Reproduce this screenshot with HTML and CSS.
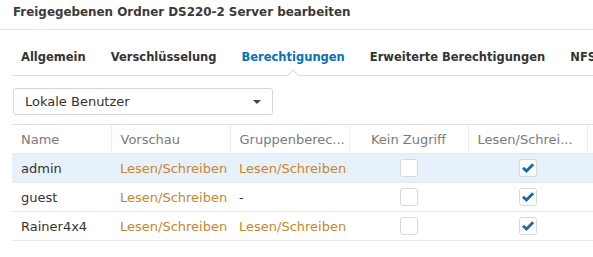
FILE: index.html
```html
<!DOCTYPE html>
<html lang="de">

<head>
    <meta charset="utf-8">
    <meta name="viewport" content="width=device-width, initial-scale=1.0">
    <title>Freigegebenen Ordner bearbeiten</title>
    <link rel="stylesheet" href="styles.css">
</head>

<body>
    <div class="dialog">
        <div class="titel">Freigegebenen Ordner DS220-2 Server bearbeiten</div>

        <nav class="tabs">
            <span class="tab">Allgemein</span>
            <span class="tab">Verschlüsselung</span>
            <span class="tab aktiv">Berechtigungen</span>
            <span class="tab">Erweiterte Berechtigungen</span>
            <span class="tab">NFS-Berechtigungen</span>
        </nav>

        <div class="inhalt">
            <div class="auswahl">
                <span>Lokale Benutzer</span>
                <span class="pfeil"></span>
            </div>

            <table class="rechte">
                <colgroup>
                    <col class="c-name">
                    <col class="c-breit">
                    <col class="c-breit">
                    <col class="c-breit">
                    <col class="c-breit">
                    <col class="c-breit">
                </colgroup>
                <thead>
                    <tr>
                        <th>Name</th>
                        <th>Vorschau</th>
                        <th>Gruppenberec...</th>
                        <th class="mitte">Kein Zugriff</th>
                        <th>Lesen/Schrei...</th>
                        <th></th>
                    </tr>
                </thead>
                <tbody>
                    <tr class="markiert">
                        <td>admin</td>
                        <td class="recht">Lesen/Schreiben</td>
                        <td class="recht">Lesen/Schreiben</td>
                        <td class="mitte"><span class="box"></span></td>
                        <td class="mitte"><span class="box"><svg viewBox="0 0 16 16"><path d="M3 7.8 L6.4 11.1 L13.2 4.3"/></svg></span></td>
                        <td></td>
                    </tr>
                    <tr>
                        <td>guest</td>
                        <td class="recht">Lesen/Schreiben</td>
                        <td>-</td>
                        <td class="mitte"><span class="box"></span></td>
                        <td class="mitte"><span class="box"><svg viewBox="0 0 16 16"><path d="M3 7.8 L6.4 11.1 L13.2 4.3"/></svg></span></td>
                        <td></td>
                    </tr>
                    <tr>
                        <td>Rainer4x4</td>
                        <td class="recht">Lesen/Schreiben</td>
                        <td class="recht">Lesen/Schreiben</td>
                        <td class="mitte"><span class="box"></span></td>
                        <td class="mitte"><span class="box"><svg viewBox="0 0 16 16"><path d="M3 7.8 L6.4 11.1 L13.2 4.3"/></svg></span></td>
                        <td></td>
                    </tr>
                </tbody>
            </table>
        </div>
    </div>
</body>

</html>
```

FILE: styles.css
```css
body {
    margin: 0;
    background: #fff;
    font-family: "DejaVu Sans", Verdana, sans-serif;
    color: #333;
    overflow: hidden;
}

.dialog {
    width: 593px;
    height: 257px;
    overflow: hidden;
}

.titel {
    height: 29px;
    line-height: 25px;
    padding-left: 13px;
    font-size: 11.9px;
    font-weight: bold;
    color: #3a3a3a;
    border-bottom: 1px solid #e3e3e3;
    white-space: nowrap;
}

.tabs {
    display: flex;
    gap: 25px;
    margin-left: 12px;
    padding: 19px 0 0 9px;
    border-bottom: 1px solid #dedede;
    white-space: nowrap;
}

.tab {
    position: relative;
    font-size: 11.5px;
    font-weight: bold;
    line-height: 16px;
    padding-bottom: 10px;
    color: #333;
}

.tab.aktiv {
    color: #0b6fb5;
}

.tab.aktiv::after {
    content: "";
    position: absolute;
    left: 50%;
    bottom: -4px;
    width: 7px;
    height: 7px;
    margin-left: -4px;
    background: #fff;
    border-top: 1px solid #dedede;
    border-left: 1px solid #dedede;
    transform: rotate(45deg);
}

.inhalt {
    padding: 12px 0 0 12px;
}

.auswahl {
    display: flex;
    align-items: center;
    justify-content: space-between;
    box-sizing: border-box;
    width: 260px;
    height: 27px;
    margin-left: 1px;
    padding: 0 11px 0 11px;
    border: 1px solid #d4d4d4;
    border-radius: 3px;
    font-size: 13px;
    color: #333;
}

.pfeil {
    width: 0;
    height: 0;
    border-left: 4px solid transparent;
    border-right: 4px solid transparent;
    border-top: 4px solid #444;
}

.rechte {
    margin-top: 9px;
    border-collapse: collapse;
    table-layout: fixed;
    width: 694px;
    font-size: 13px;
}

.c-name {
    width: 99px;
}

.c-breit {
    width: 119px;
}

.rechte th {
    height: 28px;
    padding: 0 9px;
    font-weight: normal;
    text-align: left;
    color: #7a7a7a;
    border-top: 1px solid #e0e0e0;
    border-bottom: 1px solid #e8e8e8;
    border-left: 1px solid #ececec;
    white-space: nowrap;
    overflow: hidden;
}

.rechte th:first-child {
    border-left: 0;
}

.rechte td {
    height: 28px;
    padding: 0 9px;
    border-bottom: 1px solid #e8e8e8;
    white-space: nowrap;
    overflow: hidden;
}

.rechte .mitte {
    text-align: center;
}

.rechte .recht {
    color: #c9862b;
}

.markiert td {
    background: #e6f1fb;
}

.box {
    display: inline-block;
    vertical-align: middle;
    box-sizing: border-box;
    width: 18px;
    height: 18px;
    border: 1px solid #d9d9d9;
    border-radius: 3px;
    background: #fff;
}

.box svg {
    display: block;
    width: 16px;
    height: 16px;
}

.box path {
    fill: none;
    stroke: #1c6aa8;
    stroke-width: 2.8;
}
```
